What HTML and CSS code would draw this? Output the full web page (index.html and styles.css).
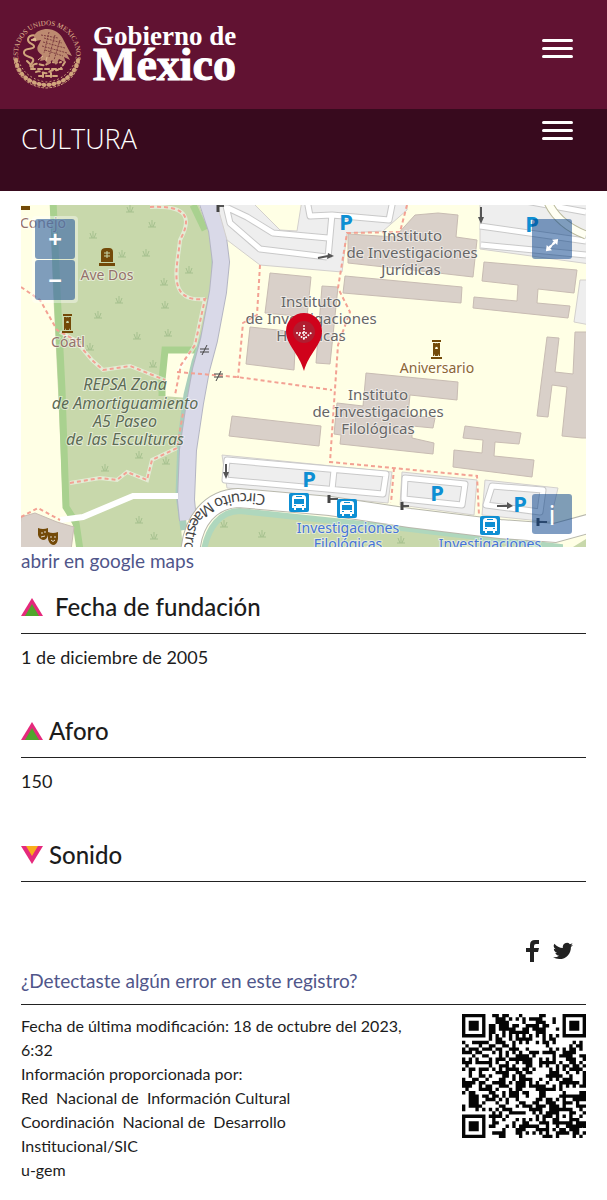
FILE: index.html
```html
<!DOCTYPE html>
<html lang="es">
<head>
<meta charset="utf-8">
<meta name="viewport" content="width=device-width, initial-scale=1">
<title>Sistema de Información Cultural</title>
<link rel="stylesheet" href="styles.css">
</head>
<body>
<header class="gov">
  <a class="brand" href="#">
    <svg class="emblem" viewBox="0 0 72 72" aria-hidden="true">
      <defs><path id="ring" d="M7.400 41A29 29 0 1 1 64.600 41"/></defs>
      <text class="ring-text"><textPath href="#ring" startOffset="50%">ESTADOS UNIDOS MEXICANOS</textPath></text>
      <g fill="none" stroke="#d0a57c" stroke-linecap="round">
        <path d="M5 42C7 56 18 66 35 67C53 66 64 56 67 42" stroke-width="4" stroke-dasharray="1 4"/>
        <path d="M3 40C4 57 17 69 35 70C55 69 67 57 69 40" stroke-width="1" stroke-dasharray="2 2"/>
        <path d="M8 43C11 54 21 62 35 64C50 63 60 54 64 43" stroke-width="1" stroke-dasharray="1 3"/>
        <path d="M27 19C23 16 17 17 17 22C17 26 24 26 23 29C22 32 14 29 13 34C12 39 20 38 22 41C24 44 17 47 20 49" stroke-width="2"/>
        <path d="M20 51H51M22 47C27 43 31 50 36 46S45 46 50 44M25 54C30 51 33 58 38 54S46 54 48 51M28 58H46M32 55V61M40 55V61M16 43L22 49M54 44L50 50" stroke-width="2" stroke-dasharray="4 3"/>
      </g>
      <path d="M23 18C25 13 31 11 36 11C43 11 50 15 53 23L61 38L56 36L59 42L53 39L55 45L48 41L45 47L41 42L37 47L34 42L29 43L31 37C26 34 25 30 28 26L30 22L24 23Z" fill="#bd8a70"/>
      <path d="M30 17L47 20M33 20L51 25M32 24L54 30M31 28L56 35M34 32L52 38M38 14L33 35M44 17L38 39M49 22L43 42" fill="none" stroke="#7d3d40" stroke-width="1" stroke-dasharray="2 1"/>
      <path d="M24 20L20 22L25 23ZM32 38L27 42M36 39L35 43" fill="#e0bb92" stroke="#e0bb92"/>
    </svg>
    <span class="wordmark"><span class="wordmark-top">Gobierno de</span><span class="wordmark-main">México</span></span>
  </a>
  <button class="burger" aria-label="Menú principal"><span></span><span></span><span></span></button>
</header>
<nav class="site">
  <a class="site-name" href="#">CULTURA</a>
  <button class="burger" aria-label="Menú de Cultura"><span></span><span></span><span></span></button>
</nav>
<main class="page">
  <div class="map">
    <svg class="map-canvas" viewBox="21 205 565 342" preserveAspectRatio="xMidYMid slice" role="img" aria-label="Mapa de ubicación">
      <defs>
        <g id="bus"><rect width="20" height="19" rx="2" fill="#0e8fd3"/><path d="M3 5Q3 2 6 2H14Q17 2 17 5V15H15V17H13V15H7V17H5V15H3Z" fill="#fff"/><path d="M5 6H15V11H5ZM5 12H7V13H5ZM13 12H15V13H13ZM7 3H13V4H7Z" fill="#0e8fd3"/></g>
        <path id="grass" d="M0 5H8M4 5V-2M3 5L1 0M5 5L7 0" fill="none" stroke="#a5c08e"/>
        <g id="statue" fill="#734a08"><path d="M1 0H10V2H1ZM0 17H11V19H0ZM2 3H4L5 6L4 9L5 12L3 16H2ZM9 3H7L6 6L7 9L6 12L8 16H9Z"/><circle cx="5.500" cy="5" r="2"/><path d="M4 9H7V16H4Z"/></g>
      </defs>
      <path d="M0 190H620V560H0Z" fill="#ffffe5"/>
      <path d="M50 200H197L208 228L215 257L216 282L207 330L196 353H167L163 396L188 398L181 440L178 493L183 550H78L73 525L63 507L58 390L53 290Z" fill="#c8d8ab"/>
      <path d="M53 200L57 290L62 390L66 507L76 523L80 550" class="hedge"/>
      <path d="M196 350H165L162 380V396" class="hedge"/>
      <path d="M193 205L205 230" class="hedge"/>
      <path d="M205 203L212 228L215 257L215 284L206 330L195 362L187 395L181 440L179 495L184 530" fill="none" stroke="#a9cfbc" stroke-width="7"/>
      <path d="M207 200L217 230L221 262L218 292L209 340L201 370L195 403L188 450L186 500L188 520" fill="none" stroke="#b4b5c3" stroke-width="18"/>
      <path d="M207 200L217 230L221 262L218 292L209 340L201 370L195 403L188 450L186 500L188 520" fill="none" stroke="#d9d9e8" stroke-width="16"/>
      <path d="M60 520L83 517L133 496L178 496" fill="none" stroke="#fff" stroke-width="6"/>
      <g class="parking">
        <path d="M216 200H250L280 230L297 231L302 200H407V210L383 231L347 233L342 272L260 265L227 240L220 215Z"/>
        <path d="M480 200H590V264L480 249Z"/><path d="M580 280H590V325L574 322Z"/>
        <path d="M222 455L392 472L388 503L227 488Z"/><path d="M402 472L477 480L474 515L400 505Z"/><path d="M485 480L558 488L550 522L482 515Z"/>
      </g>
      <g fill="none" stroke-linejoin="round">
        <path d="M226 206L230 223L260 249L327 257M228 208L247 217L273 233L328 238M332 214L328 258M307 200L310 216L332 215L389 220L393 200M227 460L386 474L383 494L225 480ZM334 470L332 490M405 478L465 484L462 505L404 499ZM492 486L543 490L540 512L486 505ZM480 226L586 241M481 245L586 255M520 200L586 212" stroke="#c9c9c9" stroke-width="7"/>
        <path d="M226 206L230 223L260 249L327 257M228 208L247 217L273 233L328 238M332 214L328 258M307 200L310 216L332 215L389 220L393 200M227 460L386 474L383 494L225 480ZM334 470L332 490M405 478L465 484L462 505L404 499ZM492 486L543 490L540 512L486 505ZM480 226L586 241M481 245L586 255M520 200L586 212" stroke="#fff" stroke-width="5"/>
      </g>
      <path d="M547 200Q557 224 586 235" fill="none" stroke="#b9b99b" stroke-width="9"/><path d="M547 200Q557 224 586 235" fill="none" stroke="#fffff3" stroke-width="7"/>
      <path d="M204 550C208 528 220 511 240 511L410 529L560 547V550Z" fill="#c8d8ab" stroke="#afd7bd" stroke-width="6"/>
      <path d="M190 555C192 519 212 499 238 498L330 506L410 518L500 529L555 533L595 522" fill="none" stroke="#b8b8ac" stroke-width="20"/>
      <path d="M190 555C192 519 212 499 238 498L330 506L410 518L500 529L555 533L595 522" fill="none" stroke="#fff" stroke-width="18"/>
      <path d="M573 547L586 539V547Z" fill="#c8d8ab"/>
      <g class="building">
        <path d="M270 273L311 277L307 317L265 313Z"/><path d="M250 327L296 332L294 370L246 364Z"/><path d="M322 286L338 287L330 364L316 363Z"/>
        <path d="M348 234L395 237L415 215L438 213L458 215L456 237L477 240L473 277L412 270L348 263Z"/><path d="M345 276L462 287L461 303L343 293Z"/>
        <path d="M484 262L577 270L574 293L538 289L537 303L570 306L568 318L473 308L474 297L517 301L518 285L482 281Z"/>
        <path d="M547 337L559 338L555 372L573 374L575 332H590V438H582L562 436L567 387L552 385L548 417L537 416Z"/>
        <path d="M366 373L458 382L457 400L410 395L408 415L435 418L433 428L412 426V438L434 443L433 454L340 444L341 435L334 434L337 403L363 406Z"/>
        <path d="M232 416L321 426L319 446L229 436Z"/>
        <path d="M465 426L521 433L519 444L495 442L494 456L534 460L532 477L453 467L454 450L482 453L483 440L463 438Z"/>
        <path d="M21 517L35 513L57 522L74 527L71 550H18Z"/>
      </g>
      <g fill="none" stroke="#fff" stroke-opacity=".5" stroke-width="4"><path d="M150 207C190 205 191 220 180 240C178 265 165 303 205 299M205 299L195 345L178 372M70 483L100 478L117 480L127 472L147 480L152 460L177 448M60 332L75 340L92 360L103 370L130 366L165 380"/></g>
      <g class="footpath">
        <path d="M21 287L40 300L57 330L75 340L92 360L103 370L130 366L165 380"/><path d="M150 207C190 205 191 220 180 240C178 265 165 303 205 299L195 345L181 365L175 395"/>
        <path d="M177 372L237 377L332 390"/><path d="M260 265L257 315L243 323L238 378"/><path d="M407 205L400 232L347 233L338 288L350 312L338 345L330 462L477 476L479 515"/><path d="M394 468L391 503"/><path d="M70 483L100 478L117 480L127 472L147 480L152 460L177 448L183 413"/><path d="M21 517L38 508L60 520"/>
      </g>
      <g>
        <use href="#grass" x="126" y="207"/><use href="#grass" x="148" y="222"/><use href="#grass" x="89" y="233"/><use href="#grass" x="118" y="252"/><use href="#grass" x="142" y="251"/><use href="#grass" x="185" y="268"/><use href="#grass" x="160" y="280"/><use href="#grass" x="115" y="298"/><use href="#grass" x="161" y="303"/><use href="#grass" x="94" y="313"/><use href="#grass" x="133" y="334"/><use href="#grass" x="164" y="331"/><use href="#grass" x="149" y="362"/><use href="#grass" x="86" y="345"/><use href="#grass" x="135" y="453"/><use href="#grass" x="162" y="459"/><use href="#grass" x="101" y="466"/><use href="#grass" x="135" y="518"/><use href="#grass" x="150" y="534"/><use href="#grass" x="220" y="522"/><use href="#grass" x="258" y="532"/><use href="#grass" x="397" y="538"/>
      </g>
      <path d="M328 253L334 256L327 259ZM478 217H484L481 224ZM223 472H229L226 479ZM507 502L513 506L507 509Z" fill="#555"/>
      <path d="M318 258L328 256M481 207V218M226 464V474M497 506H508M330 499H338M403 506H409M539 522H547M218 206H224" fill="none" stroke="#555" stroke-width="2"/>
      <path d="M329 495V503M402 502V510M538 518V526M218 205V212" stroke="#444" stroke-width="3"/>
      <path d="M200 349H209M200 352H209M207 345L202 355M214 374H223M214 377H223M221 371L216 381" stroke="#444" stroke-width="1"/>
      <g fill="#734a08"><path d="M101 264V252Q101 248 106 248H109Q113 248 113 252V262H101ZM99 263H115V266H99ZM21 206H30V210H21Z"/><path d="M104 253H110M107 251V258M104 256H110" stroke="#c8d8ab"/><path d="M38 528Q43 530 48 528V535Q47 540 43 540Q39 539 38 535ZM48 532Q53 534 58 532V539Q57 545 53 545Q49 544 48 539Z"/></g>
      <path d="M41 533H43M44 532H46M41 537L45 536M50 537H52M54 537H56M51 540Q53 543 55 540" stroke="#e4dcd0" fill="none"/>
      <use href="#statue" x="62" y="314"/><use href="#statue" x="431" y="340"/>
      <g class="map-p"><text x="346" y="230">P</text><text x="532" y="232">P</text><text x="309" y="487">P</text><text x="437" y="501">P</text><text x="520" y="512">P</text></g>
      <use href="#bus" x="289" y="493"/><use href="#bus" x="337" y="499"/><use href="#bus" x="480" y="516"/>
      <g class="map-label"><text x="412" y="241">Instituto</text><text x="412" y="258">de Investigaciones</text><text x="411" y="275">Jurídicas</text>
        <text x="311" y="307">Instituto</text><text x="311" y="324">de Investigaciones</text><text x="311" y="341">Históricas</text>
        <text x="378" y="400">Instituto</text><text x="378" y="417">de Investigaciones</text><text x="378" y="434">Filológicas</text></g>
      <g class="map-label sight"><text x="43" y="228">Conejo</text><text x="107" y="280">Ave Dos</text><text x="68" y="347">Cóatl</text><text class="brown" x="437" y="373">Aniversario</text></g>
      <g class="map-label reserve"><text x="125" y="390">REPSA Zona</text><text x="125" y="409">de Amortiguamiento</text><text x="125" y="427">A5 Paseo</text><text x="125" y="445">de las Esculturas</text></g>
      <g class="map-label stop"><text x="348" y="533">Investigaciones</text><text x="348" y="549">Filológicas</text><text x="490" y="549">Investigaciones</text></g>
      <path id="circuit" d="M266 495C234 489 206 497 191 519Q183 533 183 580" fill="none"/>
      <text class="road"><textPath href="#circuit">Circuito Maestro</textPath></text>
      <path d="M304 371C299 353 286 345 286 331A18 18 0 0 1 322 331C322 345 309 353 304 371Z" fill="#d0021b"/>
      <circle cx="304" cy="332" r="11" fill="#b11d30"/>
      <path d="M304 326V339M297 333L304 339L311 333M300 333H308" fill="none" stroke="#fff" stroke-width="2" stroke-linecap="round" stroke-dasharray="0 3"/>
    </svg>
    <div class="zoom"><button class="control" aria-label="Acercar">+</button><button class="control" aria-label="Alejar">−</button></div>
    <button class="control full" aria-label="Pantalla completa"><svg viewBox="0 0 16 16" width="14" height="14" aria-hidden="true"><path d="M15 1L14 8L12 6L10 8L8 6L10 4L8 2ZM1 15L2 8L4 10L6 8L8 10L6 12L8 14Z" fill="#fff"/><path d="M4 12L12 4" stroke="#fff" stroke-width="2"/></svg></button>
    <button class="control info" aria-label="Información del mapa">i</button>
  </div>
  <a class="link" href="#">abrir en google maps</a>

  <section class="fact">
    <h2><svg class="marker" viewBox="0 0 22 18" aria-hidden="true"><path d="M11 0L22 18H0Z" fill="#e5297c"/><path d="M11 6L18 18H4Z" fill="#50a52c"/></svg><span>&nbsp;Fecha de fundación</span></h2>
    <p>1 de diciembre de 2005</p>
  </section>
  <section class="fact">
    <h2><svg class="marker" viewBox="0 0 22 18" aria-hidden="true"><path d="M11 0L22 18H0Z" fill="#e5297c"/><path d="M11 6L18 18H4Z" fill="#50a52c"/></svg><span>Aforo</span></h2>
    <p>150</p>
  </section>
  <section class="fact">
    <h2><svg class="marker" viewBox="0 0 22 18" aria-hidden="true"><path d="M11 18L22 0H0Z" fill="#e5297c"/><path d="M11 10L17 0H5Z" fill="#f9ae1b"/></svg><span>Sonido</span></h2>
  </section>

  <div class="share">
    <a href="#" aria-label="Facebook"><svg viewBox="0 0 24 24" width="24" height="24" aria-hidden="true"><path d="M18 1V5H15Q13 5 13 7V9H18L17 13H13V23H9V13H5V9H9V6Q9 1 14 1Z" fill="#222"/></svg></a>
    <a href="#" aria-label="Twitter"><svg viewBox="0 0 24 24" width="20" height="20" aria-hidden="true"><path d="M24 4.600a10 10 0 0 1-2.800.800 5 5 0 0 0 2.200-2.700c-1 .600-2 1-3.100 1.200a4.900 4.900 0 0 0-8.400 4.500A14 14 0 0 1 1.700 3.200a4.900 4.900 0 0 0 1.500 6.600 5 5 0 0 1-2.200-.600c0 2.300 1.600 4.400 3.900 4.900a5 5 0 0 1-2.200.100 4.900 4.900 0 0 0 4.600 3.400A10 10 0 0 1 0 19.500 14 14 0 0 0 7.500 21.700c9.200 0 14.300-7.700 14-14.600A10 10 0 0 0 24 4.600z" fill="#222"/></svg></a>
  </div>
  <a class="link report" href="#">¿Detectaste algún error en este registro?</a>
  <footer class="credits">
    <p>Fecha de última modificación: 18 de octubre del 2023, 6:32<br>Información proporcionada por:<br>Red&nbsp; Nacional de&nbsp; Información Cultural<br>Coordinación&nbsp; Nacional de&nbsp; Desarrollo<br>Institucional/SIC<br>u-gem</p>
    <svg class="qr" viewBox="0 0 37 37" role="img" aria-label="Código QR"><path id="qr-modules" fill="#050505"/></svg>
  </footer>
</main>
<script src="qr.js"></script>
</body>
</html>
```
FILE: styles.css
```css
* { box-sizing: border-box; }
body { margin: 0; background: #fff; color: #1c1c1c; font-family: Lato, "Liberation Sans", sans-serif; }
a { text-decoration: none; }
button { border: 0; padding: 0; cursor: pointer; }
p, h2 { margin: 0; }

.gov { display: flex; justify-content: space-between; align-items: flex-start; background: #611232; padding: 18px 34px 19px 11px; }
.brand { display: flex; gap: 10px; color: #fff; }
.emblem { width: 72px; height: 72px; }
.ring-text { font: 7px "Liberation Serif", serif; fill: #e0b98f; text-anchor: middle; }
.wordmark { display: flex; flex-direction: column; padding-top: 5px; font-family: "Liberation Serif", serif; font-weight: bold; }
.wordmark-top { font-size: 27px; line-height: 26px; }
.wordmark-main { font-size: 46px; line-height: 32px; -webkit-text-stroke: 1px #fff; }
.burger { display: flex; flex-direction: column; gap: 5px; width: 31px; margin-top: 21px; background: none; }
.burger span { height: 3px; border-radius: 2px; background: #fff; }
.site { display: flex; justify-content: space-between; align-items: flex-start; background: #380a1e; padding: 12px 34px 34px 21px; }
.site-name { color: #fff; font: 300 27px/36px "Open Sans", sans-serif; }
.site .burger { margin-top: 0; }

.page { padding: 14px 21px 20px; }
.map { position: relative; height: 342px; overflow: hidden; }
.map-canvas { display: block; width: 100%; height: 100%; }
.hedge { fill: none; stroke: #a9d18f; stroke-width: 7; }
.parking { fill: #eee; stroke: #d3d0cd; }
.building { fill: #d9d0c9; stroke: #c8bcb3; }
.footpath { fill: none; stroke: #f3a193; stroke-width: 2; stroke-dasharray: 4 3; }
.map-label { font: 15px "Noto Sans", sans-serif; fill: #666; text-anchor: middle; paint-order: stroke; stroke: #fff; stroke-opacity: .5; stroke-width: 2px; }
.sight { font-size: 14px; fill: #94716a; }
.brown { fill: #8b6535; }
.reserve { font-size: 16px; font-style: italic; fill: #5d6b55; }
.stop { font-size: 14px; fill: #4674d8; }
.map-p { font: bold 22px "Noto Sans", sans-serif; fill: #0e8fd3; text-anchor: middle; }
.road { font: 15px "Noto Sans", sans-serif; fill: #444; }
.control { display: grid; place-items: center; width: 40px; height: 40px; background: rgba(0, 60, 136, .5); color: #fff; border-radius: 3px; font: bold 24px/40px "Open Sans", sans-serif; }
.zoom { position: absolute; top: 11px; left: 11px; display: grid; gap: 1px; padding: 3px; border-radius: 4px; background: rgba(255, 255, 255, .4); }
.full { position: absolute; top: 14px; right: 14px; padding: 11px 0 0; }
.info { position: absolute; bottom: 13px; right: 14px; font-weight: 400; font-size: 28px; }

.link { display: block; color: #50568a; font-size: 19px; line-height: 28px; }
.fact { min-height: 80px; margin-bottom: 20px; }
.link + .fact { margin-top: 16px; }
.fact h2 { display: flex; align-items: center; gap: 6px; padding-bottom: 10px; border-bottom: 1px solid #222; font-size: 24px; line-height: 32px; font-weight: 500; }
.marker { width: 22px; height: 18px; }
.fact p { padding: 9px 0 24px; font-size: 18px; line-height: 28px; }
.share { display: flex; justify-content: flex-end; align-items: center; gap: 8px; height: 24px; padding-right: 13px; }
.share a { display: flex; }
.report { margin-top: 4px; padding-bottom: 9px; border-bottom: 1px solid #222; }
.credits { display: flex; justify-content: space-between; align-items: flex-start; gap: 48px; padding-top: 9px; font-size: 16px; line-height: 24px; }
.qr { flex: 0 0 124px; height: 124px; }
```
FILE: qr.js
```js
const size = 37;
const finders = [[0, 0], [size - 7, 0], [0, size - 7]];
let state = 20231018;

function noise() {
  state = (Math.imul(state, 1103515245) + 12345) & 0x7fffffff;
  return (state >> 16) & 1;
}

function moduleAt(x, y) {
  const bit = noise();
  for (const [fx, fy] of finders) {
    const d = Math.max(Math.abs(x - fx - 3), Math.abs(y - fy - 3));
    if (d <= 4) return d !== 2 && d !== 4;
  }
  const a = Math.max(Math.abs(x - 30), Math.abs(y - 30));
  if (a <= 2) return a !== 1;
  if (x === 6 || y === 6) return (x + y) % 2 === 0;
  return bit;
}

let d = "";
for (let y = 0; y < size; y++) {
  for (let x = 0; x < size; x++) {
    if (moduleAt(x, y)) d += `M${x} ${y}h1v1h-1z`;
  }
}
document.getElementById("qr-modules").setAttribute("d", d);
```
